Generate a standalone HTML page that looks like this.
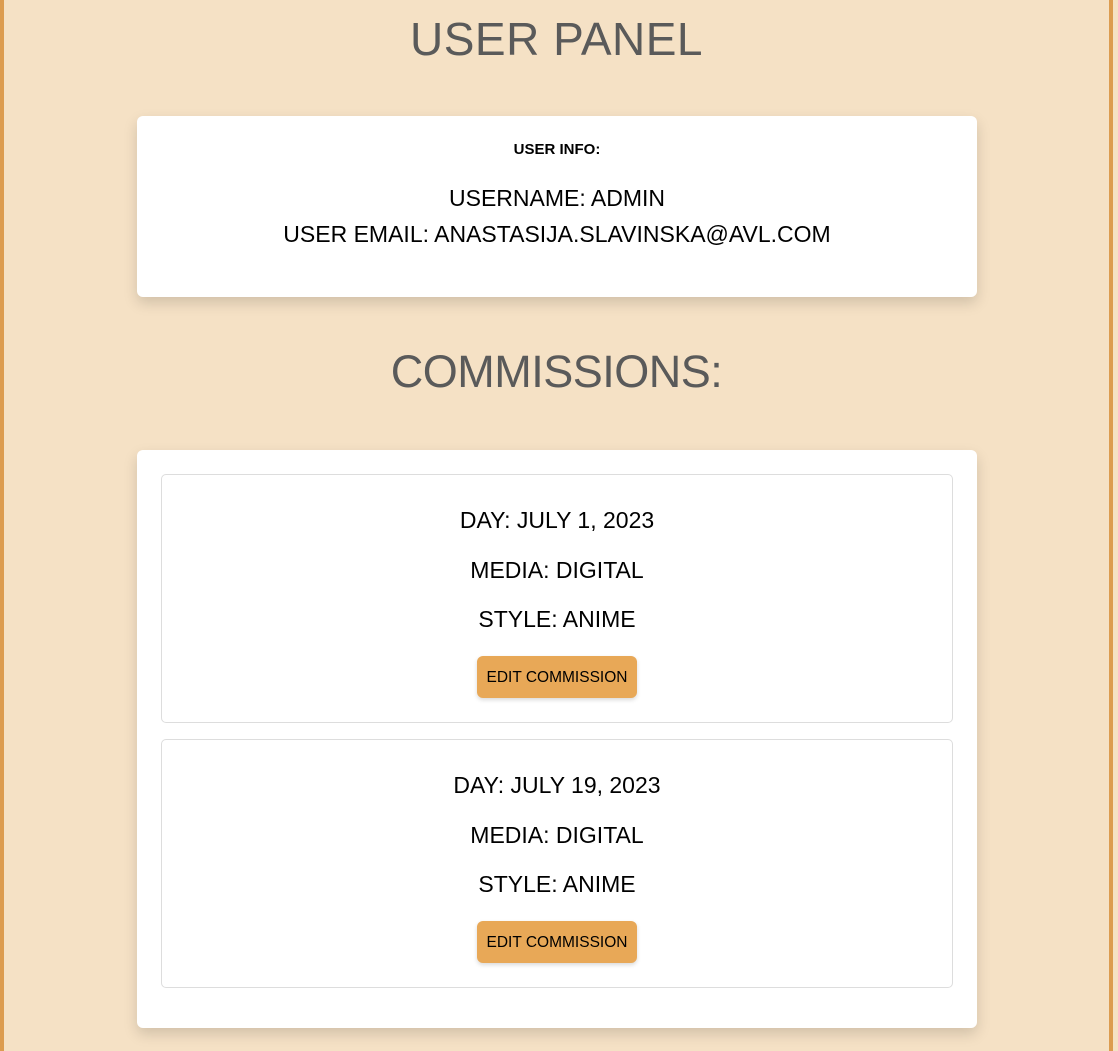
<!DOCTYPE html>
<html><head><style>
html,body{margin:0;padding:0}
body{background:#f5e1c5;font-family:"Liberation Sans",sans-serif;width:1118px;height:1051px;overflow:hidden;position:relative}
.bl{position:absolute;top:0;bottom:0;left:0;width:4px;background:#dc9c50}
.br{position:absolute;top:0;bottom:0;left:1109px;width:4px;background:#dc9c50}
h1{position:absolute;left:0;width:1113px;text-align:center;margin:0;font-weight:normal;color:#5a5a5a}
.card{position:absolute;left:137px;width:840px;background:#fff;border-radius:6px;box-shadow:0 6px 14px rgba(0,0,0,0.15)}
.c{text-align:center;color:#000}
.item{position:absolute;left:24px;width:790px;height:246px;border:1px solid #ddd;border-radius:5px}
.item p{position:absolute;left:0;width:100%;margin:0;text-align:center;font-size:23px}
.btn{position:absolute;left:315px;top:181px;width:160px;height:42px;background:#e8a857;border-radius:6px;box-shadow:0 2px 4px rgba(0,0,0,0.15);font-size:15.5px;line-height:44px;text-align:center}
</style></head><body>
<div class="bl"></div><div class="br"></div>
<h1 style="top:12px;font-size:46px;letter-spacing:0.5px">USER PANEL</h1>
<div class="card" style="top:116px;height:181px">
<div class="c" style="position:absolute;top:25px;width:100%;font-size:15px;font-weight:bold">USER INFO:</div>
<div class="c" style="position:absolute;top:69px;width:100%;font-size:23px">USERNAME: ADMIN</div>
<div class="c" style="position:absolute;top:105px;width:100%;font-size:23px">USER EMAIL: ANASTASIJA.SLAVINSKA@AVL.COM</div>
</div>
<h1 style="top:346px;font-size:45px;letter-spacing:-0.5px">COMMISSIONS:</h1>
<div class="card" style="top:450px;height:578px">
<div class="item" style="top:24px;height:247px">
<p style="top:32px">DAY: JULY 1, 2023</p>
<p style="top:82px">MEDIA: DIGITAL</p>
<p style="top:131px">STYLE: ANIME</p>
<div class="btn">EDIT COMMISSION</div>
</div>
<div class="item" style="top:289px;height:247px">
<p style="top:32px">DAY: JULY 19, 2023</p>
<p style="top:82px">MEDIA: DIGITAL</p>
<p style="top:131px">STYLE: ANIME</p>
<div class="btn">EDIT COMMISSION</div>
</div>
</div>
</body></html>
